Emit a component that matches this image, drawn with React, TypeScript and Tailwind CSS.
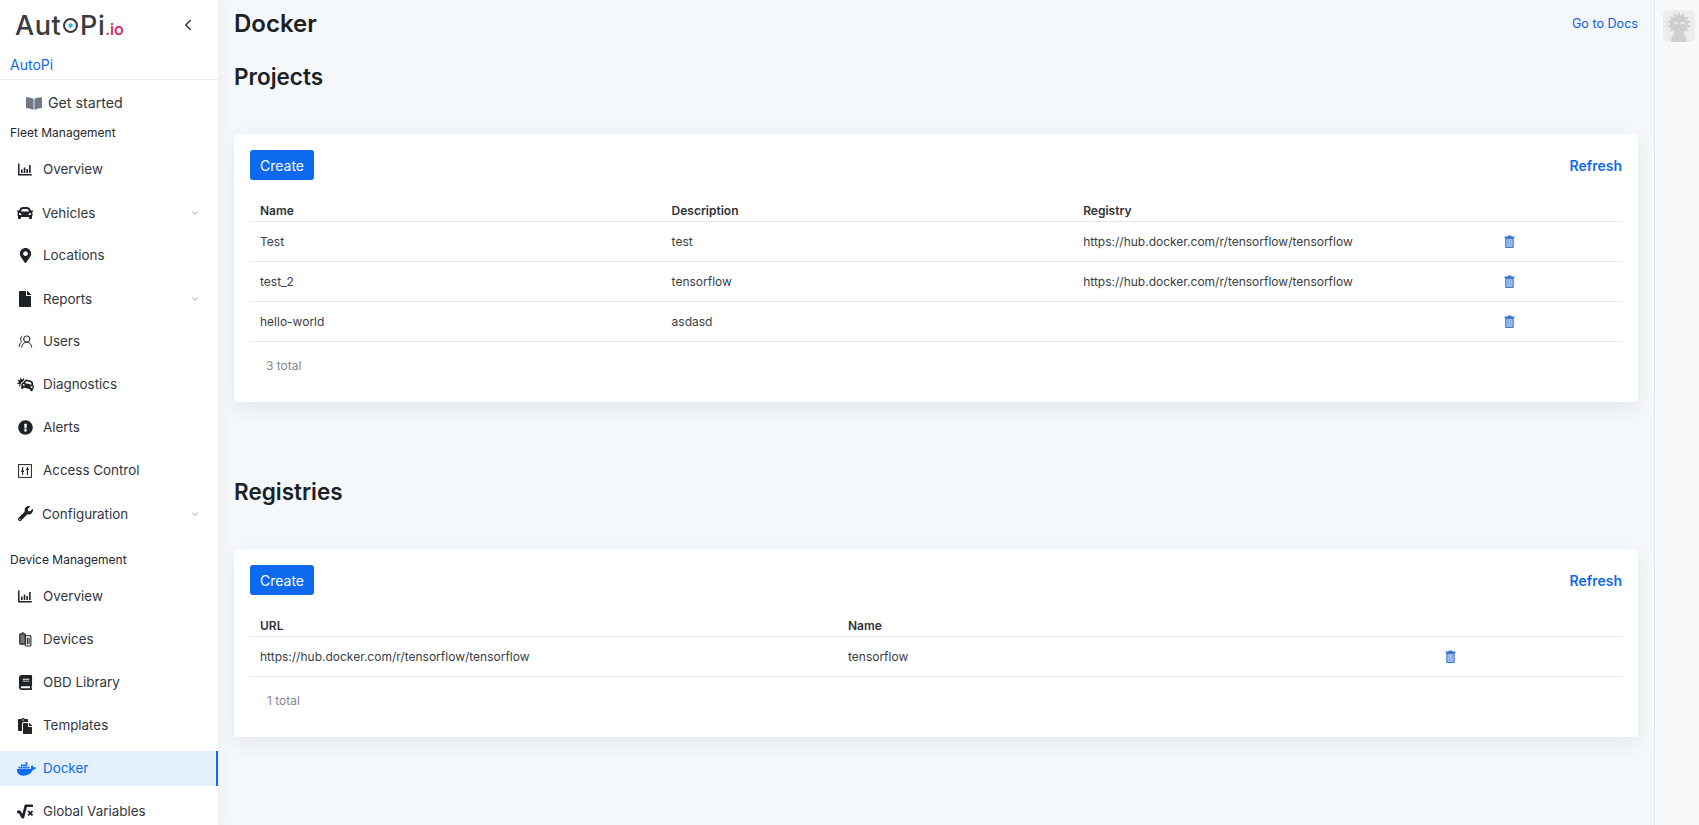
import type { ReactNode } from "react";
import {
  FaBook,
  FaBookOpen,
  FaCar,
  FaCarCrash,
  FaDocker,
  FaExclamationCircle,
  FaFile,
  FaMapMarkerAlt,
  FaPaste,
  FaSquareRootAlt,
  FaWrench
} from "react-icons/fa";
import { ChevronDown, ChevronLeft, UsersRound } from "lucide-react";

function ChartIcon() {
  return (
    <svg viewBox="0 0 14 13" className="h-[13px] w-[14px]" fill="none" stroke="currentColor">
      <path d="M0.8 0.5v11.200h13" strokeWidth="1.500" />
      <path d="M3.800 6.500v3.500M6.500 4.500v5.500M9.200 6v4M11.900 2v8" strokeWidth="1.600" />
    </svg>
  );
}

function AccessIcon() {
  return (
    <svg viewBox="0 0 14 14" className="h-[14px] w-[14px]" fill="none" stroke="currentColor">
      <rect x="0.6" y="0.6" width="12.8" height="12.8" strokeWidth="1" />
      <path d="M4.6 3v8M9.4 3v8" strokeWidth="1.1" />
      <path d="M3.2 7.2h2.8M8 5.4h2.8" strokeWidth="1.4" />
    </svg>
  );
}

function DevicesIcon() {
  return (
    <svg viewBox="0 0 14 16" className="h-[15px] w-[13px]" fill="none" stroke="currentColor" strokeWidth="1.2">
      <rect x="0.8" y="2" width="6" height="11" rx="1" fill="#777" />
      <rect x="6.8" y="4" width="6" height="11" rx="1" fill="#fff" />
      <path d="M9 6v7M10.8 6v7M3 0.8h2" />
    </svg>
  );
}

function TrashIcon() {
  return (
    <svg viewBox="0 0 11 13" className="h-[13px] w-[11px]">
      <path d="M3.8 0.5h3.4l.5 1H10.500v1.400H.5V1.500h2.800z" fill="#3f78d0" />
      <path d="M1.200 3h8.600v9a1 1 0 0 1-1 1H2.200a1 1 0 0 1-1-1z" fill="#3f78d0" />
      <path d="M2.400 4.200h6.200v7.600H2.400z" fill="#b5cdf0" />
      <path d="M4.200 5v6M6.800 5v6" stroke="#5d8fdb" strokeWidth="0.9" />
    </svg>
  );
}

// spiky hair outline for the default avatar
const hair = Array.from({ length: 28 }, (_, i) => {
  const a = (i / 28) * Math.PI * 2;
  const r = i % 2 ? 12 : 8.5;
  return `${(16 + r * Math.cos(a)).toFixed(1)},${(14 + r * Math.sin(a)).toFixed(1)}`;
}).join(" ");

function NavItem({
  icon,
  label,
  active,
  caret,
  labelClass
}: {
  icon: ReactNode;
  label: string;
  active?: boolean;
  caret?: boolean;
  labelClass?: string;
}) {
  return (
    <div
      className={`flex h-[35px] items-center pl-[18px] pr-[18px] text-[13.4px] ${
        active ? "border-r-2 border-[#0d6aee] bg-[#e4f0fc] text-[#0d6aee]" : "text-[#33363b]"
      }`}
    >
      <span className={`flex w-[14px] shrink-0 items-center justify-center ${active ? "" : "text-[#1f2226]"}`}>{icon}</span>
      <span className={labelClass ?? "ml-[11px]"}>{label}</span>
      {caret ? <ChevronDown className="ml-auto h-[10px] w-[10px] text-[#8a8d93]" /> : null}
    </div>
  );
}

function Sidebar() {
  const s = "h-[15px] w-[15px] shrink-0";
  return (
    <aside className="z-10 h-full w-[218px] shrink-0 overflow-hidden bg-white shadow-[0_0_12px_rgba(60,80,100,0.08)]">
      <div className="flex h-[50px] items-center pl-[15px] pr-[21px]">
        <div className="flex items-baseline text-[27px] font-medium leading-none tracking-[0.5px] text-[#3a3b3f]">
          <span>Aut</span>
          <svg viewBox="0 0 20 20" className="mx-[1px] h-[17px] w-[17px] self-center" fill="none">
            <circle cx="10" cy="10" r="7.6" stroke="#3a3b3f" strokeWidth="2.4" />
            <circle cx="10" cy="10" r="2.6" fill="#28b6ee" />
          </svg>
          <span>Pi</span>
          <span className="text-[16px] tracking-normal text-[#dc1450]">.io</span>
        </div>
        <ChevronLeft className="ml-auto h-[18px] w-[18px] text-[#33363b]" strokeWidth={2} />
      </div>
      <div className="flex h-[30px] items-center border-b border-[#e8eaed] pl-[10px] text-[14px] text-[#0d6aee]">AutoPi</div>
      <div className="flex h-[46px] items-center pl-[26px] text-[14.2px] text-[#33363b]">
        <FaBookOpen className="h-[15px] w-[16px] text-[#6f7883]" />
        <span className="ml-[6px]">Get started</span>
      </div>
      <div className="mt-[2px] flex h-[10px] items-center pl-[10px] text-[12px] text-[#23262b]">Fleet Management</div>
      <div className="mt-[14px] flex flex-col gap-[8px]">
        <NavItem icon={<ChartIcon />} label="Overview" />
        <NavItem icon={<FaCar className="h-[16px] w-[16px] shrink-0" />} label="Vehicles" caret labelClass="ml-[10px] mt-[2px]" />
        <NavItem icon={<FaMapMarkerAlt className={s} />} label="Locations" />
        <NavItem icon={<FaFile className="h-[16px] w-[16px] shrink-0" />} label="Reports" caret labelClass="ml-[11px] mt-[2px]" />
        <NavItem icon={<UsersRound className={`${s} -scale-x-100`} strokeWidth={1.6} />} label="Users" />
        <NavItem icon={<FaCarCrash className="h-[17px] w-[17px] shrink-0" />} label="Diagnostics" />
        <NavItem icon={<FaExclamationCircle className={s} />} label="Alerts" />
        <NavItem icon={<AccessIcon />} label="Access Control" />
        <NavItem icon={<FaWrench className={s} />} label="Configuration" caret labelClass="ml-[10px] mt-[2px]" />
      </div>
      <div className="mt-[19px] flex h-[20px] items-center pl-[10px] text-[12px] text-[#23262b]">Device Management</div>
      <div className="mt-[9px] flex flex-col gap-[8px]">
        <NavItem icon={<ChartIcon />} label="Overview" />
        <NavItem icon={<DevicesIcon />} label="Devices" />
        <NavItem icon={<FaBook className={s} />} label="OBD Library" />
        <NavItem icon={<FaPaste className="h-[16px] w-[16px] shrink-0" />} label="Templates" />
        <NavItem icon={<FaDocker className="ml-[3px] h-[16px] w-[19px] shrink-0" />} label="Docker" active />
        <NavItem icon={<FaSquareRootAlt className="h-[15px] w-[16px] shrink-0" />} label="Global Variables" />
      </div>
    </aside>
  );
}

function DataCard({
  columns,
  rows,
  total,
  totalClass,
  className
}: {
  columns: { label: string; width: string }[];
  rows: string[][];
  total: string;
  totalClass: string;
  className: string;
}) {
  return (
    <section className={`rounded-[4px] bg-white px-[16px] pt-[16px] shadow-[0_6px_18px_rgba(60,80,100,0.09)] ${className}`}>
      <div className="flex items-center justify-between">
        <button className="flex h-[30px] w-[64px] items-center justify-center rounded-[3px] bg-[#0d6aee] text-[14px] text-white">
          Create
        </button>
        <span className="text-[14px] font-semibold text-[#0d6aee]">Refresh</span>
      </div>
      <table className="mt-[16px] w-full table-fixed text-left text-[12px]">
        <colgroup>
          {columns.map((c) => (
            <col key={c.label} className={c.width} />
          ))}
        </colgroup>
        <thead>
          <tr className="h-[25px] border-b border-[#e6e8ea] text-[#2f3238]">
            {columns.map((c) => (
              <th key={c.label} className="px-[10px] pt-[5px] font-semibold">
                {c.label}
              </th>
            ))}
          </tr>
        </thead>
        <tbody className="text-[#3a3d42]">
          {rows.map((row) => (
            <tr key={row[0]} className="h-[40px] border-b border-[#e6e8ea]">
              {row.map((cell, i) => (
                <td key={i} className="px-[10px] pt-[2px]">
                  {cell}
                </td>
              ))}
              <td className="px-[10px]">
                <span className="ml-[9px] flex w-[11px]">
                  <TrashIcon />
                </span>
              </td>
            </tr>
          ))}
        </tbody>
      </table>
      <div className={`mt-[14px] text-[12px] leading-[20px] text-[#85888e] ${totalClass}`}>{total}</div>
    </section>
  );
}

export default function App() {
  return (
    <div className="flex h-[825px] w-[1699px] overflow-hidden bg-[#f5f8fa] font-['Inter',sans-serif]">
      <Sidebar />
      <main className="min-w-0 flex-1 pl-[16px] pr-[16px]">
        <div className="flex h-[48px] items-center justify-between">
          <h1 className="text-[24px] font-semibold text-[#1c2126]">Docker</h1>
          <a className="text-[12.6px] text-[#0d5fd6]">Go to Docs</a>
        </div>
        <h2 className="mt-[13px] text-[22.5px] font-semibold leading-[32px] text-[#1c2126]">Projects</h2>
        <DataCard
          className="mt-[41px] h-[268px]"
          totalClass="pl-[16px]"
          total="3 total"
          columns={[
            { label: "Name", width: "w-[30%]" },
            { label: "Description", width: "w-[30%]" },
            { label: "Registry", width: "w-[30%]" },
            { label: "", width: "w-[10%]" }
          ]}
          rows={[
            ["Test", "test", "https://hub.docker.com/r/tensorflow/tensorflow"],
            ["test_2", "tensorflow", "https://hub.docker.com/r/tensorflow/tensorflow"],
            ["hello-world", "asdasd", ""]
          ]}
        />
        <h2 className="mt-[74px] text-[22.5px] font-semibold leading-[32px] text-[#1c2126]">Registries</h2>
        <DataCard
          className="mt-[41px] h-[188px]"
          totalClass="pl-[17px]"
          total="1 total"
          columns={[
            { label: "URL", width: "w-[42.857%]" },
            { label: "Name", width: "w-[42.857%]" },
            { label: "", width: "w-[14.286%]" }
          ]}
          rows={[["https://hub.docker.com/r/tensorflow/tensorflow", "tensorflow"]]}
        />
      </main>
      <aside className="w-[45px] shrink-0 border-l border-[#e2e6ea] bg-[#f7f9fb] pl-[8px] pt-[10px]">
        <div className="h-[32px] w-[32px] overflow-hidden rounded-[5px] bg-[#ececec]">
          <svg viewBox="0 0 32 32" className="h-[32px] w-[32px]">
            <polygon points={hair} fill="#cfcfcf" />
            <path d="M13 20h6v4c3 .5 4.500 2 5 8H8c.5-6 2-7.500 5-8z" fill="#cfcfcf" />
            <path d="M11 13h4M17.500 13h4" stroke="#ececec" strokeWidth="1.500" />
          </svg>
        </div>
      </aside>
    </div>
  );
}
